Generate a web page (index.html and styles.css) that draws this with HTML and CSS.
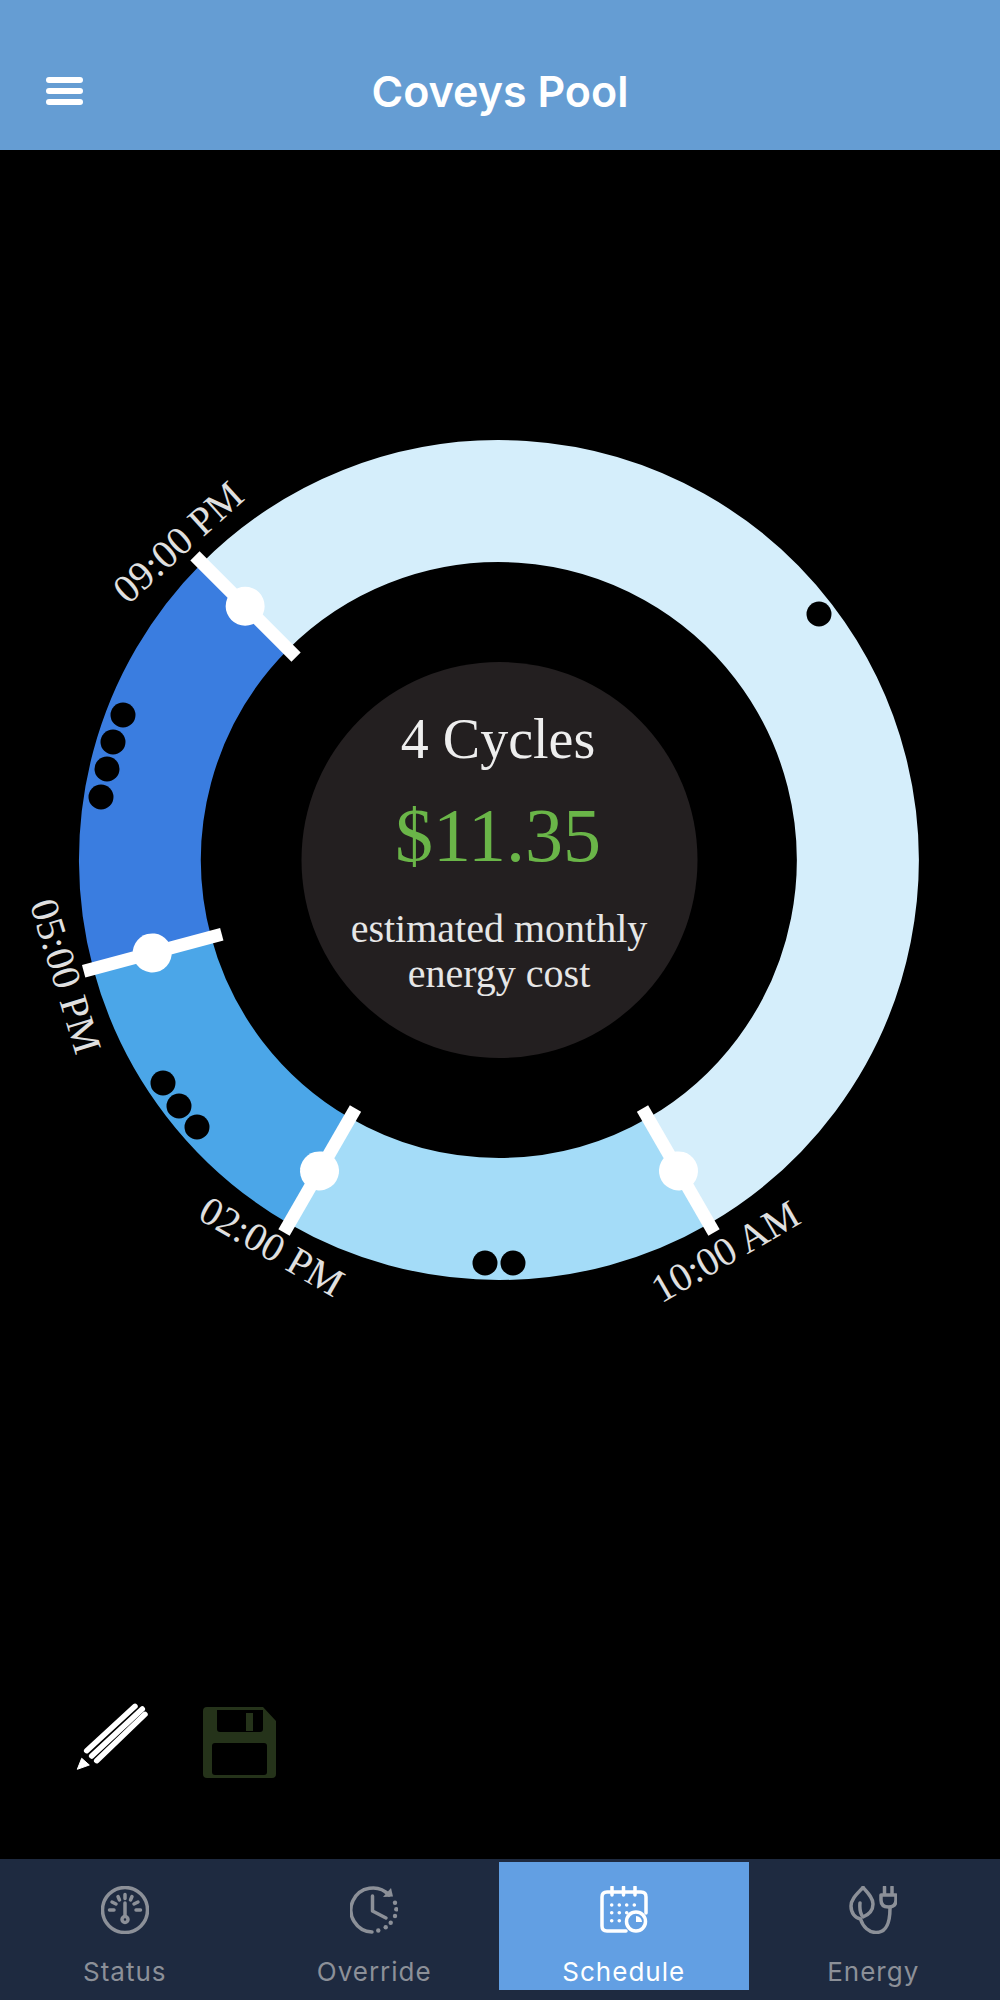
FILE: index.html
```html
<!Doctype html>
<html>
    <head>
        <title>Coveys Pool</title>
        <link rel="stylesheet" href="styles.css">
    </head>
    <body>
        <div class='app'>
            <!-- Header -->
            <div class='header'>
                <div class='menu-icon'>
                    <div></div>
                    <div></div>
                    <div></div>
                </div>
                <h1 class='title'>Coveys Pool</h1>
            </div>

            <!-- Schedule dial -->
            <div class='stage'>
                <svg class='dial' viewBox='0 360 1000 1000' width='1000' height='1000'>
                    <path class='seg seg-night' d='M245.1 606.1 A359 359 0 1 1 678.5 1170.9'/>
                    <path class='seg seg-morning' d='M678.5 1170.9 A359 359 0 0 1 319.5 1170.9'/>
                    <path class='seg seg-afternoon' d='M319.5 1170.9 A359 359 0 0 1 152.2 952.9'/>
                    <path class='seg seg-evening' d='M152.2 952.9 A359 359 0 0 1 245.1 606.1'/>

                    <circle class='speed-dot' cx='819' cy='614' r='12.5'/>
                    <circle class='speed-dot' cx='123' cy='715' r='12.5'/>
                    <circle class='speed-dot' cx='113' cy='742' r='12.5'/>
                    <circle class='speed-dot' cx='107' cy='769' r='12.5'/>
                    <circle class='speed-dot' cx='101' cy='797' r='12.5'/>
                    <circle class='speed-dot' cx='163' cy='1083' r='12.5'/>
                    <circle class='speed-dot' cx='179' cy='1106' r='12.5'/>
                    <circle class='speed-dot' cx='197' cy='1127' r='12.5'/>
                    <circle class='speed-dot' cx='485' cy='1263' r='12.5'/>
                    <circle class='speed-dot' cx='513' cy='1263' r='12.5'/>

                    <g transform='rotate(-30 499 860)'>
                        <line class='handle-bar' x1='499' y1='1147' x2='499' y2='1290'/>
                        <circle class='handle-knob' cx='499' cy='1219' r='19.5'/>
                    </g>
                    <g transform='rotate(30 499 860)'>
                        <line class='handle-bar' x1='499' y1='1147' x2='499' y2='1290'/>
                        <circle class='handle-knob' cx='499' cy='1219' r='19.5'/>
                    </g>
                    <g transform='rotate(75 499 860)'>
                        <line class='handle-bar' x1='499' y1='1147' x2='499' y2='1290'/>
                        <circle class='handle-knob' cx='499' cy='1219' r='19.5'/>
                    </g>
                    <g transform='rotate(135 499 860)'>
                        <line class='handle-bar' x1='499' y1='1147' x2='499' y2='1290'/>
                        <circle class='handle-knob' cx='499' cy='1219' r='19.5'/>
                    </g>

                    <text class='time-label' transform='translate(732 1263) rotate(-30)'>10:00 AM</text>
                    <text class='time-label' transform='translate(265 1258) rotate(30)'>02:00 PM</text>
                    <text class='time-label' transform='translate(53 980) rotate(73)'>05:00 PM</text>
                    <text class='time-label' transform='translate(187 552) rotate(-42)'>09:00 PM</text>

                    <circle class='center-disc' cx='499.5' cy='860' r='198'/>
                    <text class='cycles' x='498' y='758'>4 Cycles</text>
                    <text class='cost' x='498' y='861'>$11.35</text>
                    <text class='cost-note' x='499' y='942'>estimated monthly</text>
                    <text class='cost-note' x='499' y='987'>energy cost</text>
                </svg>
            </div>

            <!-- Edit and save -->
            <div class='actions'>
                <svg class='pencil' viewBox='0 0 80 80' width='80' height='80'>
                    <line x1='16.7' y1='50.7' x2='65' y2='6.3'/>
                    <line x1='21.7' y1='56' x2='72.3' y2='9'/>
                    <line x1='26.7' y1='60.7' x2='75' y2='14.3'/>
                    <polygon points='7.3,69.3 11.7,58.3 19.3,65'/>
                </svg>
                <svg class='save' viewBox='0 0 73 71' width='73' height='71'>
                    <path fill-rule='evenodd' d='M4 0 H60 L73 14 V67 Q73 71 69 71 H4 Q0 71 0 67 V4 Q0 0 4 0 Z M14 3 V22 Q14 25 17 25 H57 Q60 25 60 22 V3 Z M43 6 H50 V24 H43 Z M12 36 Q9 36 9 39 V65 Q9 68 12 68 H61 Q64 68 64 65 V39 Q64 36 61 36 Z'/>
                </svg>
            </div>

            <!-- Bottom tabs -->
            <div class='tabs'>
                <div class='tab'>
                    <svg class='tab-icon' viewBox='0 0 48 48' width='48' height='48'>
                        <circle cx='24' cy='24' r='22.5'/>
                        <path d='M8.5 24 H13 M11 16 L15 18 M17 10.5 L18.5 14 M24 8.5 V12.5 M31 10.5 L29.5 14 M37 16 L33 18 M35 24 H39.5'/>
                        <path d='M24 17 V30'/>
                        <circle cx='24' cy='33.5' r='3'/>
                    </svg>
                    <span class='tab-label'>Status</span>
                </div>
                <div class='tab'>
                    <svg class='tab-icon' viewBox='0 0 48 48' width='48' height='48'>
                        <path d='M39 9 A22 22 0 1 0 22 46'/>
                        <path class='solid' d='M33 11 L43 10.5 L41 2 Z'/>
                        <path d='M22.5 10 V25 L36 32'/>
                        <circle class='solid' cx='45' cy='16.7' r='2.2'/>
                        <circle class='solid' cx='46.3' cy='23.3' r='2.2'/>
                        <circle class='solid' cx='45' cy='30' r='2.2'/>
                        <circle class='solid' cx='40.7' cy='36.7' r='2.2'/>
                        <circle class='solid' cx='35.7' cy='41.3' r='2.2'/>
                        <circle class='solid' cx='28.3' cy='44.5' r='2.2'/>
                    </svg>
                    <span class='tab-label'>Override</span>
                </div>
                <div class='tab tab-active'>
                    <svg class='tab-icon' viewBox='0 0 48 48' width='48' height='48'>
                        <path d='M26 45 H7 Q2 45 2 40 V11 Q2 6 7 6 H41 Q46 6 46 11 V27'/>
                        <path d='M12 1 V9 M23.5 1 V9 M35 1 V9'/>
                        <circle class='solid' cx='11.7' cy='19' r='1.8'/>
                        <circle class='solid' cx='19.3' cy='19' r='1.8'/>
                        <circle class='solid' cx='26.7' cy='19' r='1.8'/>
                        <circle class='solid' cx='34.3' cy='19' r='1.8'/>
                        <circle class='solid' cx='11.7' cy='26.7' r='1.8'/>
                        <circle class='solid' cx='19.3' cy='26.7' r='1.8'/>
                        <circle class='solid' cx='26.7' cy='26.7' r='1.8'/>
                        <circle class='solid' cx='11.7' cy='34.7' r='1.8'/>
                        <circle class='solid' cx='19.3' cy='34.7' r='1.8'/>
                        <circle cx='36' cy='35.5' r='9.5'/>
                        <path class='solid' d='M36 30 V36 H42 A6 6 0 0 0 36 30 Z'/>
                    </svg>
                    <span class='tab-label'>Schedule</span>
                </div>
                <div class='tab'>
                    <svg class='tab-icon' viewBox='0 0 48 48' width='48' height='48'>
                        <path d='M14 1.5 C8 8 2 13 2 20 C2 27 6 32 11.5 33 C14 41 20 46.5 27 46.5 C36 46.5 41 40 41 22'/>
                        <path d='M14 1.5 C19 7 24 12 24 18 C24 24 20 28.5 14 31 C11 27 10.5 22 11 17'/>
                        <path d='M35.5 1 V8 M43 1 V8'/>
                        <path d='M32 9 H47 V14 Q47 21 39.5 21 Q32 21 32 14 Z'/>
                    </svg>
                    <span class='tab-label'>Energy</span>
                </div>
            </div>
        </div>
    </body>
</html>
```

FILE: styles.css
```css
/* Page */
body {
    margin: 0;
    background-color: #000;
}

.app {
    width: 1000px;
    height: 2000px;
    display: flex;
    flex-direction: column;
    overflow: hidden;
}

/* Header */
.header {
    height: 150px;
    flex-shrink: 0;
    background-color: #659dd3;
    display: flex;
    align-items: center;
    justify-content: center;
    position: relative;
}

.menu-icon {
    position: absolute;
    left: 46px;
    top: 77px;
    width: 37px;
    display: flex;
    flex-direction: column;
    gap: 5px;
}

.menu-icon > div {
    height: 6px;
    border-radius: 3px;
    background-color: #fff;
}

.title {
    margin: 32px 0 0 0;
    font-family: "Inter", sans-serif;
    font-size: 43px;
    font-weight: 600;
    color: #fff;
}

/* Dial */
.stage {
    flex: 1;
    padding-top: 210px;
}

.dial {
    display: block;
}

.seg {
    fill: none;
    stroke-width: 122;
}

.seg-night {
    stroke: #d5eefb;
}

.seg-morning {
    stroke: #a4dcf8;
}

.seg-afternoon {
    stroke: #4ba6e8;
}

.seg-evening {
    stroke: #3a7de0;
}

.speed-dot {
    fill: #000;
}

.handle-bar {
    stroke: #fff;
    stroke-width: 13;
}

.handle-knob {
    fill: #fff;
}

.time-label {
    font-family: "Liberation Serif", serif;
    font-size: 40px;
    fill: #e0e0e0;
    text-anchor: middle;
}

.center-disc {
    fill: #231f20;
}

.cycles,
.cost,
.cost-note {
    font-family: "Liberation Serif", serif;
    text-anchor: middle;
}

.cycles {
    font-size: 56px;
    fill: #eeeeee;
}

.cost {
    font-size: 76px;
    fill: #6ab548;
}

.cost-note {
    font-size: 40px;
    fill: #e6e6e6;
}

/* Edit and save */
.actions {
    height: 159px;
    flex-shrink: 0;
    display: flex;
    align-items: flex-start;
    padding-left: 70px;
    box-sizing: border-box;
}

.pencil {
    display: block;
}

.pencil line {
    stroke: #fff;
    stroke-width: 5.5;
    stroke-linecap: round;
}

.pencil polygon {
    fill: #fff;
    stroke: #fff;
    stroke-width: 1;
    stroke-linejoin: round;
}

.save {
    display: block;
    margin: 7px 0 0 53px;
    fill: #25331a;
}

/* Bottom tabs */
.tabs {
    height: 141px;
    flex-shrink: 0;
    background-color: #1e2a40;
    display: grid;
    grid-template-columns: repeat(4, 1fr);
    padding: 3px 2px 10px 0;
    box-sizing: border-box;
}

.tab {
    display: flex;
    flex-direction: column;
    align-items: center;
    padding-top: 24px;
    color: #8c9098;
}

.tab-active {
    background-color: #629fe3;
    color: #fff;
}

.tab-icon {
    display: block;
    fill: none;
    stroke: currentColor;
    stroke-width: 3.5;
    stroke-linecap: round;
    stroke-linejoin: round;
}

.tab-icon .solid {
    fill: currentColor;
    stroke: none;
}

.tab-label {
    margin-top: 23px;
    font-family: "Inter", sans-serif;
    font-size: 26px;
    line-height: 30px;
    letter-spacing: 1px;
}
```
